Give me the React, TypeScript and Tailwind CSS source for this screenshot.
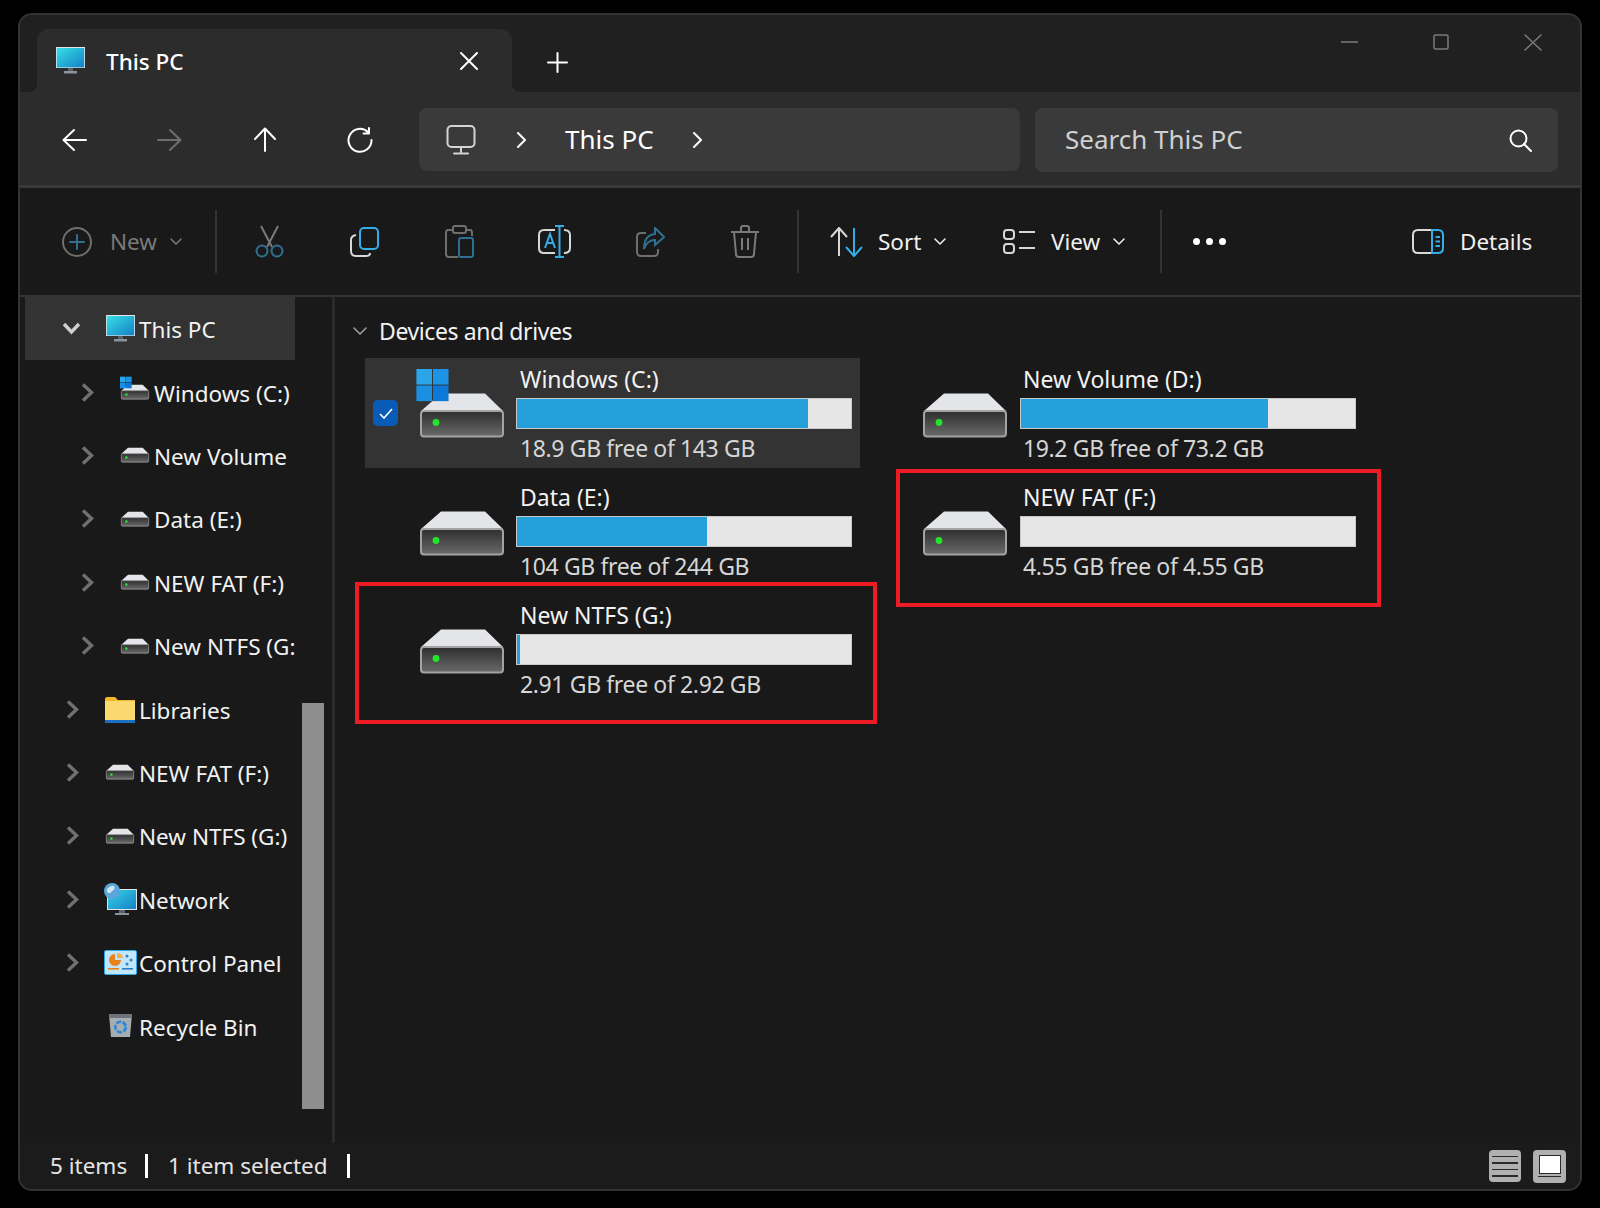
import type { ReactNode } from 'react';

function Ico({ w, h, vb, className, children }: { w: number; h: number; vb?: string; className?: string; children: ReactNode }) {
  return (
    <svg width={w} height={h} viewBox={vb ?? `0 0 ${w} ${h}`} fill="none" stroke="currentColor" strokeWidth={2} strokeLinecap="round" strokeLinejoin="round" className={className}>
      {children}
    </svg>
  );
}

function MonitorColor({ w = 29, h = 27 }: { w?: number; h?: number }) {
  return (
    <svg width={w} height={h} viewBox="0 0 29 27" className="shrink-0 overflow-visible">
      <defs>
        <linearGradient id="mon" x1="0" y1="0" x2="1" y2="1">
          <stop offset="0" stopColor="#35dfe4" />
          <stop offset="1" stopColor="#1680c8" />
        </linearGradient>
      </defs>
      <rect x="0" y="0" width="29" height="21" fill="#dfe6ea" />
      <rect x="0.8" y="1" width="27.4" height="19.4" fill="url(#mon)" />
      <rect x="12" y="21" width="5" height="3" fill="#59636b" />
      <rect x="8" y="24" width="13" height="2.5" fill="#8b949b" />
    </svg>
  );
}

function WinLogo({ x, y, s }: { x: number; y: number; s: number }) {
  const g = s * 0.06;
  return (
    <g>
      <rect x={x} y={y} width={s} height={s} fill="#2aa5ea" />
      <rect x={x + s + g} y={y} width={s} height={s} fill="#1c93e4" />
      <rect x={x} y={y + s + g} width={s} height={s} fill="#1b90e2" />
      <rect x={x + s + g} y={y + s + g} width={s} height={s} fill="#0c79d8" />
    </g>
  );
}

function Drive({ win, small }: { win?: boolean; small?: boolean }) {
  return (
    <svg width={small ? 28 : 84} height={small ? 16 : 44} viewBox="0 0 84 44" className="shrink-0 overflow-visible">
      <defs>
        <linearGradient id="drvface" x1="0" y1="0" x2="0" y2="1">
          <stop offset="0" stopColor="#2e2e2e" />
          <stop offset="1" stopColor="#6a6a6a" />
        </linearGradient>
      </defs>
      <path d="M21 0.5 H 65 L 83 18 H 1 Z" fill="#e3e5e8" />
      <rect x="1" y="18" width="82" height="25.5" rx="3" fill="url(#drvface)" stroke="#a3a3a3" strokeWidth="2" />
      <circle cx="16" cy="29.5" r={small ? 4 : 3.4} fill="#22e52a" />
      {win && <WinLogo x={small ? -3 : -3.6} y={small ? -24 : -24} s={small ? 17 : 15.6} />}
    </svg>
  );
}

function Folder() {
  return (
    <svg width="30" height="27" viewBox="0 0 30 27" className="shrink-0">
      <path d="M0 3 Q0 1 2 1 H10 L13 4 H30 V25 H0 Z" fill="#f4b62c" />
      <rect x="0" y="5" width="30" height="19" fill="#fbd96f" />
      <rect x="0" y="24" width="30" height="3" fill="#1a6fc0" />
    </svg>
  );
}

function NetworkIcon() {
  return (
    <svg width="33" height="32" viewBox="0 0 33 32" className="shrink-0">
      <defs>
        <linearGradient id="netmon" x1="0" y1="0" x2="1" y2="1">
          <stop offset="0" stopColor="#35d5e4" />
          <stop offset="1" stopColor="#1680c8" />
        </linearGradient>
      </defs>
      <rect x="3" y="6" width="30" height="21" fill="#dfe6ea" />
      <rect x="4" y="7" width="28" height="19" fill="url(#netmon)" />
      <rect x="15" y="27" width="6" height="3" fill="#59636b" />
      <rect x="11" y="30" width="14" height="2" fill="#8b949b" />
      <circle cx="8" cy="8" r="8" fill="#5aa6d8" />
      <path d="M3 6 Q7 2 10 3 Q12 6 8 8 Q6 12 3 9 Z" fill="#cfe6f2" />
    </svg>
  );
}

function ControlPanelIcon() {
  return (
    <svg width="33" height="25" viewBox="0 0 33 25" className="shrink-0">
      <rect x="0.5" y="0.5" width="32" height="24" rx="1.5" fill="#bfe6fa" stroke="#2fa6e8" />
      <path d="M11 4 A6 6 0 1 0 17 10 H11 Z" fill="#e8811c" />
      <path d="M13 3 A6 6 0 0 1 19 8 H13 Z" fill="#f2b04a" />
      <circle cx="23" cy="6" r="1.5" fill="#3a7fb8" />
      <circle cx="27" cy="10" r="1.5" fill="#3a7fb8" />
      <circle cx="23" cy="14" r="1.5" fill="#3a7fb8" />
      <rect x="4" y="18" width="11" height="1.6" fill="#e8811c" />
      <rect x="18" y="18" width="11" height="1.6" fill="#2f7fc0" />
    </svg>
  );
}

function RecycleIcon() {
  return (
    <svg width="25" height="25" viewBox="0 0 25 25" className="shrink-0">
      <path d="M1 1 H24 L22 24 H3 Z" fill="#a5adb3" />
      <path d="M1 1 H24 L23.5 5 H1.5 Z" fill="#6d7378" />
      <circle cx="12.5" cy="14" r="5.2" fill="none" stroke="#2a86d8" strokeWidth="2.6" strokeDasharray="5 1.5" />
    </svg>
  );
}

function TreeChevron({ open }: { open?: boolean }) {
  if (open) {
    return (
      <svg width="19" height="13" viewBox="0 0 19 13" fill="none" stroke="#cfcfcf" strokeWidth="3.4" className="shrink-0">
        <path d="M2 2 L9.5 10 L17 2" />
      </svg>
    );
  }
  return (
    <svg width="13" height="19" viewBox="0 0 13 19" fill="none" stroke="#707070" strokeWidth="3.4" className="shrink-0">
      <path d="M2 1.5 L10.5 9.5 L2 17.5" />
    </svg>
  );
}

const tree = [
  { label: 'Windows (C:)', sub: true, icon: <Drive small win /> },
  { label: 'New Volume', sub: true, icon: <Drive small /> },
  { label: 'Data (E:)', sub: true, icon: <Drive small /> },
  { label: 'NEW FAT (F:)', sub: true, icon: <Drive small /> },
  { label: 'New NTFS (G:)', sub: true, icon: <Drive small /> },
  { label: 'Libraries', icon: <Folder /> },
  { label: 'NEW FAT (F:)', icon: <Drive small /> },
  { label: 'New NTFS (G:)', icon: <Drive small /> },
  { label: 'Network', icon: <NetworkIcon /> },
  { label: 'Control Panel', icon: <ControlPanelIcon /> },
  { label: 'Recycle Bin', icon: <RecycleIcon />, noChevron: true },
];

function DriveTile({ name, used, sub, win, selected, second, children }: { name: string; used: number; sub: string; win?: boolean; selected?: boolean; second?: boolean; children?: ReactNode }) {
  return (
    <div className={`relative flex h-[110px] w-[495px] items-start ${selected ? 'bg-[#333333]' : ''}`}>
      {selected ? (
        <div className="ml-2 mt-[42px] flex h-[26px] w-[25px] items-center justify-center rounded-[5px] bg-[#0a5bb5]">
          <svg width="14" height="11" viewBox="0 0 14 11" fill="none" stroke="#fff" strokeWidth="1.6">
            <path d="M1 6 L5 10 L13 1" />
          </svg>
        </div>
      ) : (
        <div className="ml-2 w-[25px]" />
      )}
      <div className={`mt-[35px] ${second ? 'ml-[21px]' : 'ml-[22px]'}`}>
        <Drive win={win} />
      </div>
      <div className={`w-[336px] pt-[5px] ${second ? 'ml-[13px]' : 'ml-[12px]'}`}>
        <div className={`h-[35px] text-[23px] leading-[33px] text-[#f2f2f2] ${second ? 'pl-[3px]' : 'pl-[4px]'}`}>{name}</div>
        <div className="h-[31px] border border-[#c8c8c8] bg-[#e6e6e6]">
          <div className="h-full bg-[#26a0da]" style={{ width: `${used}%` }} />
        </div>
        <div className={`h-[38px] text-[23px] leading-[38px] tracking-[-0.37px] text-[#d6d6d6] ${second ? 'pl-[3px]' : 'pl-[4px]'}`}>{sub}</div>
      </div>
      {children}
    </div>
  );
}

export default function App() {
  return (
    <div className="h-[1208px] w-[1600px] overflow-hidden bg-black pl-[18px] pt-[13px] font-['Noto_Sans','Open_Sans',sans-serif]">
      <div className="flex h-[1178px] w-[1564px] flex-col overflow-hidden rounded-[14px] border-2 border-[#333333] bg-[#191919]">
        {/* title bar */}
        <div className="flex h-[77px] shrink-0 bg-[#2c2c2c]">
          <div className="w-[17px] rounded-br-[8px] bg-[#202020]" />
          <div className="w-[475px] bg-[#202020] pt-[14px]">
            <div className="flex h-[63px] items-center rounded-t-[12px] bg-[#2c2c2c] pl-[19px]">
              <MonitorColor />
              <span className="ml-[21px] w-[354px] pt-[2px] text-[22.5px] font-medium text-white">This PC</span>
              <Ico w={18} h={18} className="text-white">
                <path d="M1 1 L17 17 M17 1 L1 17" />
              </Ico>
            </div>
          </div>
          <div className="flex flex-1 rounded-bl-[8px] bg-[#202020]">
            <div className="ml-[35px] mt-[37px] h-[20px] text-white">
              <Ico w={21} h={21}>
                <path d="M10.5 1 V20 M1 10.5 H20" />
              </Ico>
            </div>
            <div className="ml-auto mr-[38px] mt-[18px] flex h-[18px] items-center text-[#7b7b7b]">
              <Ico w={17} h={2} className="mr-[75px]">
                <path d="M0 1 H17" strokeWidth={1.5} />
              </Ico>
              <Ico w={16} h={16} className="mr-[75px]">
                <rect x="1" y="1" width="14" height="14" rx="1.5" strokeWidth={1.5} />
              </Ico>
              <Ico w={18} h={17}>
                <path d="M1 1 L17 16 M17 1 L1 16" strokeWidth={1.5} />
              </Ico>
            </div>
          </div>
        </div>

        {/* nav bar */}
        <div className="flex h-[96px] shrink-0 items-start border-b-[3px] border-[#3a3a3a] bg-[#2c2c2c] pl-[7px] pt-[16px]">
          <div className="flex h-[63px] w-[95px] items-center justify-center text-white">
            <Ico w={25} h={24}>
              <path d="M24 12 H2 M12 2 L1.5 12 L12 22" />
            </Ico>
          </div>
          <div className="flex h-[63px] w-[95px] items-center justify-center text-[#6e6e6e]">
            <Ico w={25} h={24}>
              <path d="M1 12 H23 M13 2 L23.5 12 L13 22" />
            </Ico>
          </div>
          <div className="flex h-[63px] w-[95px] items-center justify-center text-white">
            <Ico w={24} h={25}>
              <path d="M12 24 V2 M2 12 L12 1.5 L22 12" />
            </Ico>
          </div>
          <div className="flex h-[63px] w-[95px] items-center justify-center text-white">
            <Ico w={26} h={26}>
              <path d="M21 5 A11.5 11.5 0 1 0 24.5 13 M22 1 V6.5 H16.5" />
            </Ico>
          </div>
          <div className="ml-3 flex h-[63px] w-[601px] items-center rounded-[8px] bg-[#3a3a3a] pl-[27px]">
            <Ico w={30} h={30} className="text-[#d4d4d4]">
              <rect x="1.5" y="1" width="27" height="21" rx="4" />
              <path d="M15 22 V27 M8 28.5 H22" />
            </Ico>
            <Ico w={11} h={16} className="ml-[40px] text-white">
              <path d="M2 1 L9 8 L2 15" />
            </Ico>
            <span className="ml-[38px] w-[89px] text-[26px] text-white">This PC</span>
            <Ico w={11} h={16} className="ml-[38px] text-white">
              <path d="M2 1 L9 8 L2 15" />
            </Ico>
          </div>
          <div className="ml-[15px] flex h-[64px] w-[523px] items-center justify-between rounded-[8px] bg-[#3a3a3a] pl-[30px] pr-[26px]">
            <span className="pb-[2px] text-[26px] text-[#d0d0d0]">Search This PC</span>
            <Ico w={23} h={23} className="text-white">
              <circle cx="9.5" cy="9.5" r="8" />
              <path d="M15 15 L22 22" />
            </Ico>
          </div>
        </div>

        {/* command bar */}
        <div className="flex h-[109px] shrink-0 items-center border-b-2 border-[#333333] bg-[#191919] text-[22.5px]">
          <div className="flex w-[195px] items-center pl-[42px] text-[#7a7a7a]">
            <Ico w={30} h={30} className="text-[#6e6e6e]">
              <circle cx="15" cy="15" r="14" />
              <path d="M15 8 V22 M8 15 H22" stroke="#2f6f90" />
            </Ico>
            <span className="ml-[18px] w-[60px]">New</span>
            <Ico w={12} h={8}>
              <path d="M1 1 L6 6 L11 1" strokeWidth={1.5} />
            </Ico>
          </div>
          <div className="h-[63px] w-[2px] bg-[#333333]" />
          <div className="ml-[5px] flex">
            <div className="flex h-[40px] w-[95px] items-center justify-center">
              <svg width="29" height="33" viewBox="0 0 29 33" fill="none" strokeWidth="2">
                <path d="M6 1 L17 22 M23 1 L12 22" stroke="#7a7a7a" />
                <circle cx="7" cy="26" r="5.5" stroke="#2f6f90" />
                <circle cx="22" cy="26" r="5.5" stroke="#2f6f90" />
              </svg>
            </div>
            <div className="flex h-[40px] w-[95px] items-center justify-center">
              <svg width="29" height="30" viewBox="0 0 29 30" fill="none" strokeWidth="2">
                <rect x="10" y="1" width="18" height="21" rx="4" stroke="#35aee8" />
                <path d="M6 8 Q1 9 1 13 V24 Q1 29 6 29 H16 Q20 29 20 26" stroke="#d8d8d8" />
              </svg>
            </div>
            <div className="flex h-[40px] w-[95px] items-center justify-center">
              <svg width="29" height="33" viewBox="0 0 29 33" fill="none" strokeWidth="2">
                <path d="M9 5 H3 Q1 5 1 8 V29 Q1 32 4 32 H13" stroke="#6e6e6e" />
                <rect x="8" y="1" width="13" height="7" rx="2" stroke="#6e6e6e" />
                <path d="M21 5 H25 Q27 5 27 8 V11" stroke="#6e6e6e" />
                <rect x="14" y="13" width="14" height="19" rx="2" stroke="#2f6f90" />
              </svg>
            </div>
            <div className="flex h-[40px] w-[95px] items-center justify-center">
              <svg width="33" height="33" viewBox="0 0 33 33" fill="none" strokeWidth="2">
                <path d="M17 5 H6 Q1 5 1 10 V23 Q1 28 6 28 H17 M26 5 Q32 5 32 10 V23 Q32 28 26 28" stroke="#d8d8d8" />
                <path d="M21.5 1 V32 M17 1 H26 M17 32 H26" stroke="#35aee8" />
                <path d="M7 23 L12 9 L17 23 M9 18 H15" stroke="#35aee8" />
              </svg>
            </div>
            <div className="flex h-[40px] w-[96px] items-center justify-center">
              <svg width="29" height="30" viewBox="0 0 29 30" fill="none" strokeWidth="2">
                <path d="M10 6 H5 Q1 6 1 10 V25 Q1 29 5 29 H18 Q22 29 22 25 V22" stroke="#6e6e6e" />
                <path d="M19 1 L28 10 L19 18 V13 Q11 13 8 22 Q8 8 19 7 Z" stroke="#2f6f90" />
              </svg>
            </div>
            <div className="flex h-[40px] w-[94px] items-center justify-center">
              <svg width="30" height="33" viewBox="0 0 30 33" fill="none" strokeWidth="2" stroke="#7a7a7a">
                <path d="M1 7 H29 M11 7 V3 Q11 1 13 1 H17 Q19 1 19 3 V7 M4 7 L6 29 Q6 32 9 32 H21 Q24 32 24 29 L26 7 M12 13 V25 M18 13 V25" />
              </svg>
            </div>
          </div>
          <div className="ml-[5px] h-[63px] w-[2px] bg-[#333333]" />
          <div className="ml-[31px] flex w-[173px] items-center text-[#f0f0f0]">
            <svg width="33" height="30" viewBox="0 0 33 30" fill="none" strokeWidth="2" strokeLinejoin="round">
              <path d="M9 29 V2 M1 10 L9 1 L17 10" stroke="#d8d8d8" />
              <path d="M24 1 V28 M16 20 L24 29 L32 20" stroke="#35aee8" />
            </svg>
            <span className="ml-[15px] w-[56px]">Sort</span>
            <Ico w={12} h={8}>
              <path d="M1 1 L6 6 L11 1" strokeWidth={1.5} />
            </Ico>
          </div>
          <div className="flex w-[157px] items-center text-[#f0f0f0]">
            <svg width="33" height="25" viewBox="0 0 33 25" fill="none" strokeWidth="2" stroke="#d8d8d8">
              <rect x="1" y="1" width="10" height="9" rx="3" />
              <rect x="1" y="15" width="10" height="9" rx="3" />
              <path d="M16 3 H32 M16 19 H32" />
            </svg>
            <span className="ml-[15px] w-[62px]">View</span>
            <Ico w={12} h={8}>
              <path d="M1 1 L6 6 L11 1" strokeWidth={1.5} />
            </Ico>
          </div>
          <div className="h-[63px] w-[2px] bg-[#333333]" />
          <div className="ml-[31px] flex w-[33px] justify-between">
            <div className="size-[7px] rounded-full bg-white" />
            <div className="size-[7px] rounded-full bg-white" />
            <div className="size-[7px] rounded-full bg-white" />
          </div>
          <div className="ml-[186px] flex items-center text-[#f0f0f0]">
            <svg width="32" height="25" viewBox="0 0 32 25" fill="none" strokeWidth="2">
              <path d="M20 1 H6 Q1 1 1 6 V19 Q1 24 6 24 H20" stroke="#d8d8d8" />
              <path d="M20 1 H26 Q31 1 31 6 V19 Q31 24 26 24 H20 Z" stroke="#35aee8" />
              <path d="M23.5 8 H28 M23.5 12.5 H28 M23.5 17 H28" stroke="#35aee8" />
            </svg>
            <span className="ml-4">Details</span>
          </div>
        </div>

        {/* body */}
        <div className="flex min-h-0 flex-1">
          <div className="flex w-[315px] shrink-0 border-r-[3px] border-[#2b2b2b]">
            <div className="w-[5px]" />
            <div className="w-[270px] overflow-hidden text-[22.5px] text-[#f2f2f2]">
              <div className="flex h-[63.4px] items-center bg-[#333333] pl-[37px]">
                <TreeChevron open />
                <div className="ml-[24px] flex w-[30px] justify-center">
                  <MonitorColor />
                </div>
                <span className="ml-[4px] whitespace-nowrap pt-[3px]">This PC</span>
              </div>
              {tree.map((row, i) => (
                <div key={i} className={`flex h-[63.4px] items-center ${row.sub ? 'pl-[56px]' : 'pl-[41px]'}`}>
                  {row.noChevron ? <div className="w-[13px]" /> : <TreeChevron />}
                  <div className="ml-[26px] flex w-[30px] shrink-0 justify-center">{row.icon}</div>
                  <span className="ml-[4px] whitespace-nowrap pt-[3px]">{row.label}</span>
                </div>
              ))}
            </div>
            <div className="ml-[7px] w-[22px] pt-[406px]">
              <div className="h-[406px] bg-[#8e8e8e]" />
            </div>
          </div>
          <div className="min-w-0 flex-1 pl-[30px] pt-[10px]">
            <div className="-ml-[12px] flex h-[48px] items-center text-[23px] text-[#f2f2f2]">
              <Ico w={14} h={9} className="text-[#a0a0a0]">
                <path d="M1 1 L7 7 L13 1" strokeWidth={1.5} />
              </Ico>
              <span className="ml-[12px] tracking-[-0.4px]">Devices and drives</span>
            </div>
            <div className="mt-[3px] grid grid-cols-[495px_495px] gap-x-[9px] gap-y-2">
              <DriveTile name="Windows (C:)" used={87} sub="18.9 GB free of 143 GB" win selected />
              <DriveTile name="New Volume (D:)" used={74} sub="19.2 GB free of 73.2 GB" second />
              <DriveTile name="Data (E:)" used={57} sub="104 GB free of 244 GB" />
              <DriveTile name="NEW FAT (F:)" used={0} sub="4.55 GB free of 4.55 GB" second>
                <div className="absolute -top-[7px] bottom-[-21px] left-[27px] right-[-17px] border-4 border-[#ed1c24]" />
              </DriveTile>
              <DriveTile name="New NTFS (G:)" used={1} sub="2.91 GB free of 2.92 GB">
                <div className="absolute -left-[10px] -right-[17px] -top-[12px] bottom-[-20px] border-4 border-[#ed1c24]" />
              </DriveTile>
            </div>
          </div>
        </div>

        {/* status bar */}
        <div className="flex h-[46px] shrink-0 items-center bg-[#1b1b1b] pl-[30px] pr-[14px] text-[22.5px] text-[#e4e4e4]">
          <span className="w-[76px] whitespace-nowrap">5 items</span>
          <div className="ml-[19px] h-[24px] w-[3px] bg-white" />
          <span className="ml-[20px] w-[157px] whitespace-nowrap">1 item selected</span>
          <div className="ml-[22px] h-[24px] w-[3px] bg-white" />
          <div className="ml-auto flex size-[32px] flex-col justify-center gap-[5px] rounded-[4px] bg-[#b0b0b0] px-[3px]">
            <div className="h-[1.5px] bg-[#2a2a2a]" />
            <div className="h-[1.5px] bg-[#2a2a2a]" />
            <div className="h-[1.5px] bg-[#2a2a2a]" />
            <div className="h-[1.5px] bg-[#2a2a2a]" />
          </div>
          <div className="ml-3 flex size-[33px] flex-col items-center rounded-[4px] bg-[#b0b0b0] px-[5px] pt-[5px]">
            <div className="h-[19px] w-[22px] border border-[#2a2a2a] bg-white" />
            <div className="mt-[2px] h-[1.5px] w-[23px] bg-[#2a2a2a]" />
          </div>
        </div>
      </div>
    </div>
  );
}
